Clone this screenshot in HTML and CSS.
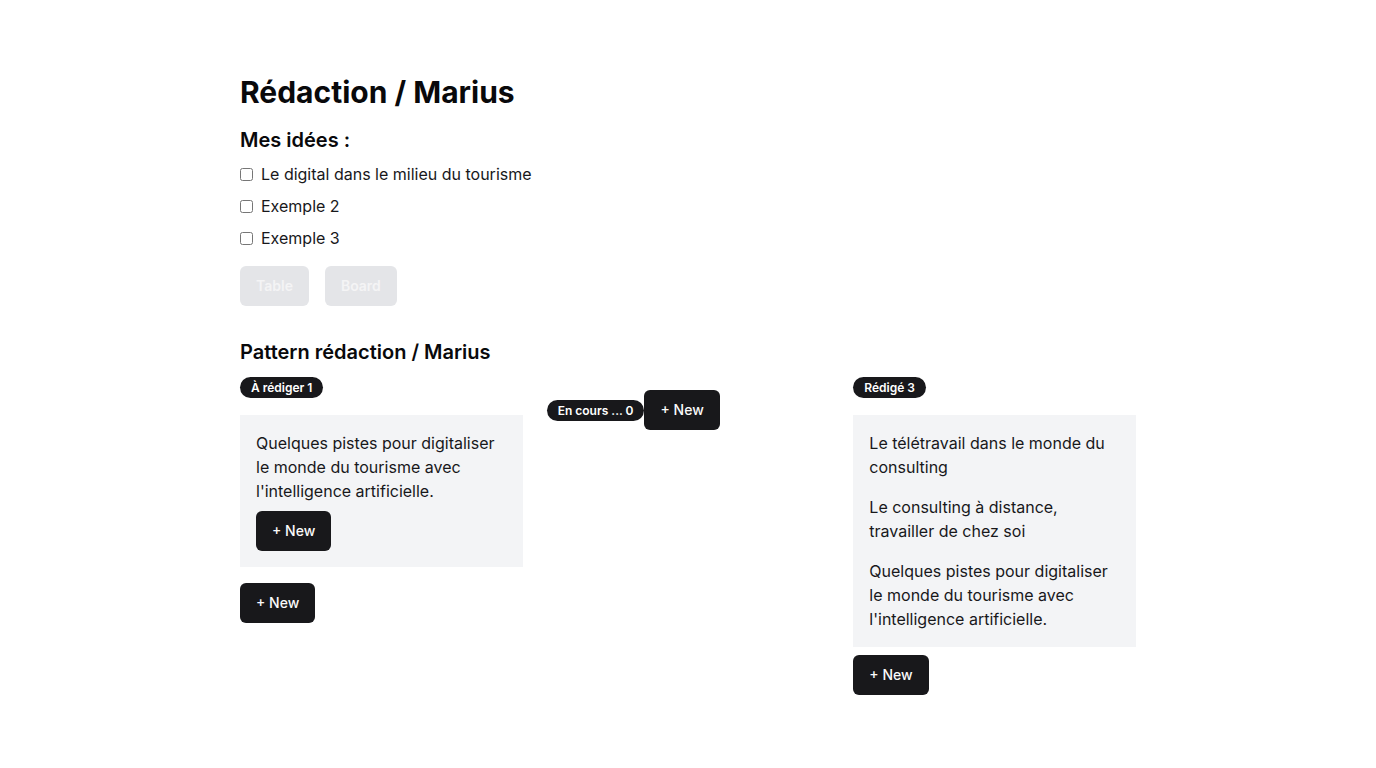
FILE: index.html
```html
<!DOCTYPE html>
<html lang="fr">
<head>
<meta charset="utf-8">
<title>Rédaction / Marius</title>
<link rel="stylesheet" href="styles.css">
</head>
<body>
<main class="page">
  <h1 class="title">Rédaction / Marius</h1>
  <h2 class="subtitle">Mes idées :</h2>
  <ul class="ideas">
    <li class="idea"><input type="checkbox" class="check"><span>Le digital dans le milieu du tourisme</span></li>
    <li class="idea"><input type="checkbox" class="check"><span>Exemple 2</span></li>
    <li class="idea"><input type="checkbox" class="check"><span>Exemple 3</span></li>
  </ul>
  <div class="views">
    <button class="view-btn" disabled>Table</button>
    <button class="view-btn" disabled>Board</button>
  </div>
  <h2 class="board-title">Pattern rédaction / Marius</h2>
  <div class="board">
    <section class="column">
      <span class="badge">À rédiger 1</span>
      <div class="card-list">
        <p class="card-text">Quelques pistes pour digitaliser le monde du tourisme avec l'intelligence artificielle.</p>
        <button class="btn btn-inner">+ New</button>
      </div>
      <button class="btn btn-after-left">+ New</button>
    </section>
    <section class="column column-inline">
      <span class="badge">En cours ... 0</span>
      <button class="btn">+ New</button>
    </section>
    <section class="column">
      <span class="badge">Rédigé 3</span>
      <div class="card-list">
        <p class="card-text">Le télétravail dans le monde du consulting</p>
        <p class="card-text">Le consulting à distance, travailler de chez soi</p>
        <p class="card-text">Quelques pistes pour digitaliser le monde du tourisme avec l'intelligence artificielle.</p>
      </div>
      <button class="btn btn-after-right">+ New</button>
    </section>
  </div>
</main>
</body>
</html>
```

FILE: styles.css
```css
* { box-sizing: border-box; }
html, body { margin: 0; padding: 0; background: #ffffff; }
body {
  font-family: Inter, "Liberation Sans", sans-serif;
  color: #09090b;
  font-size: 16px;
  line-height: 24px;
}
.page {
  max-width: 896px;
  margin: 0 auto;
  padding-top: 74px;
}
.title {
  margin: 0;
  font-size: 30px;
  line-height: 36px;
  font-weight: 700;
}
.subtitle {
  margin: 16px 0 0;
  font-size: 20px;
  line-height: 28px;
  font-weight: 600;
}
.ideas {
  list-style: none;
  margin: 8px 0 0;
  padding: 0;
  display: flex;
  flex-direction: column;
  gap: 8px;
}
.idea {
  display: flex;
  align-items: center;
  gap: 8px;
  color: #18181b;
}
.check {
  margin: 0;
  width: 13px;
  height: 13px;
}
.views {
  display: flex;
  gap: 16px;
  margin-top: 16px;
}
.view-btn {
  font-family: inherit;
  font-size: 14px;
  line-height: 20px;
  font-weight: 600;
  color: #f4f4f5;
  background: #e4e5e8;
  border: none;
  border-radius: 6px;
  padding: 10px 16px;
}
.board-title {
  margin: 32px 0 0;
  font-size: 20px;
  line-height: 28px;
  font-weight: 600;
  color: #09090b;
}
.board {
  display: grid;
  grid-template-columns: repeat(3, 1fr);
  gap: 24px;
  align-items: start;
  margin-top: 11px;
}
.column {
  display: flex;
  flex-direction: column;
  align-items: flex-start;
}
.column-inline {
  flex-direction: row;
  align-items: center;
  margin-top: 13px;
}
.badge {
  display: inline-block;
  background: #18181b;
  color: #ffffff;
  font-size: 12px;
  line-height: 17px;
  font-weight: 600;
  padding: 2px 11px;
  border-radius: 999px;
  white-space: nowrap;
}
.card-list {
  align-self: stretch;
  background: #f3f4f6;
  padding: 16px;
  margin-top: 17px;
  display: flex;
  flex-direction: column;
  gap: 16px;
}
.card-text {
  margin: 0;
  font-size: 16px;
  line-height: 24px;
  color: #18181b;
}
.btn {
  font-family: inherit;
  font-size: 14px;
  line-height: 20px;
  font-weight: 500;
  color: #fafafa;
  background: #18181b;
  border: none;
  border-radius: 6px;
  padding: 10px 16px;
  white-space: nowrap;
}
.btn-inner {
  align-self: flex-start;
  margin-top: -8px;
}
.btn-after-left { margin-top: 16px; }
.btn-after-right { margin-top: 8px; }
```
